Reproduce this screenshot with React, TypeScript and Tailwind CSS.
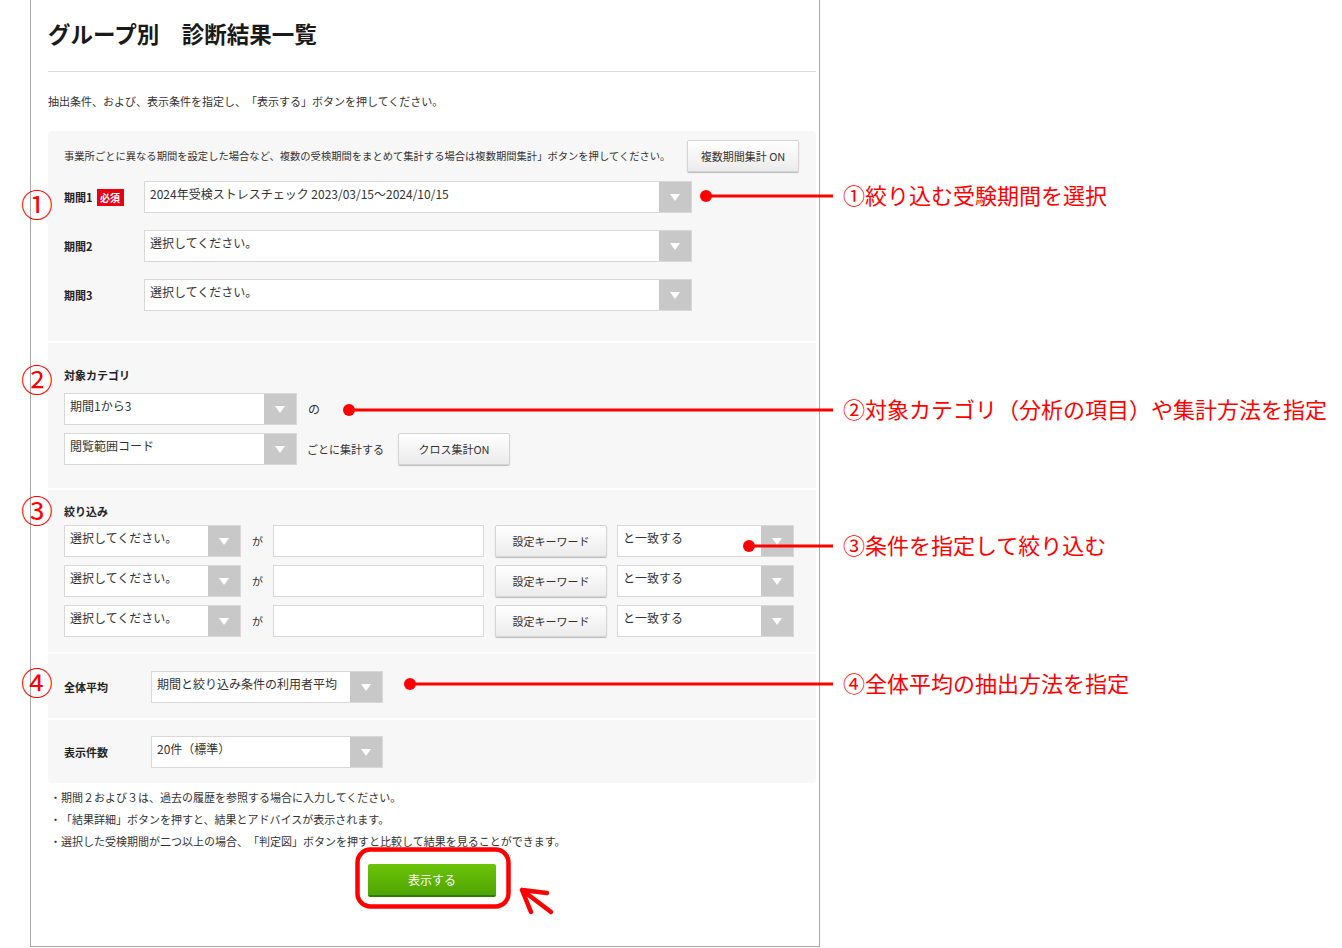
import React from "react";

const FONT = "font-['Noto_Sans_CJK_JP','Noto_Sans',sans-serif] [text-spacing-trim:space-all]";

function Arrow() {
  return (
    <svg width="10" height="7" viewBox="0 0 10 7">
      <path d="M0 0 L10 0 L5 7 Z" fill="#ffffff" />
    </svg>
  );
}

function Select({ w, text }: { w: string; text: string }) {
  return (
    <div className={`flex h-[32px] border border-[#d8d8d8] bg-white ${w}`}>
      <span className="flex-1 truncate pl-[5px] pt-[4px] text-[12px] leading-[15px] text-[#333]">{text}</span>
      <div className="flex w-[32px] items-center justify-center bg-[#c8c8c8]">
        <Arrow />
      </div>
    </div>
  );
}

function GrayButton({ w, label }: { w: string; label: string }) {
  return (
    <button
      className={`flex h-[32px] items-center justify-center rounded-[2px] border border-[#d4d4d4] bg-linear-to-b from-white to-[#ebebeb] text-[11px] text-[#333] shadow-[0_1px_1px_rgba(0,0,0,0.25)] ${w}`}
    >
      {label}
    </button>
  );
}

function Circled({ ch, cy }: { ch: string; cy: number }) {
  return (
    <div
      className="absolute left-[21px] w-[32px] text-center text-[32px] leading-[32px] text-[#ff0000]"
      style={{ top: cy - 16 }}
    >
      {ch}
    </div>
  );
}

function Note({ text, cy }: { text: string; cy: number }) {
  return (
    <div
      className="absolute left-[843px] whitespace-nowrap text-[22px] leading-[30px] text-[#ff0000]"
      style={{ top: cy - 17 }}
    >
      {text}
    </div>
  );
}

export default function App() {
  const filterRows = [0, 1, 2];
  return (
    <div className={`relative h-[948px] w-[1342px] overflow-hidden bg-white ${FONT}`}>
      <div className="ml-[30px] h-[947px] w-[790px] border-x border-b border-[#a8a8a8] pl-[17px]">
        <div className="w-[768px]">
          <h1 className="pt-[17px] text-[22.5px] font-bold leading-[32px] text-[#1a1a1a]">グループ別　診断結果一覧</h1>
          <div className="mt-[22px] h-px bg-[#d9d9d9]" />
          <p className="mt-[21px] text-[11px] leading-[16px] text-[#333]">
            抽出条件、および、表示条件を指定し、「表示する」ボタンを押してください。
          </p>

          <div className="mt-[22px] flex flex-col gap-[2px] overflow-hidden rounded-[4px]">
            {/* section 1 */}
            <div className="bg-[#f7f7f7] pb-[30px] pt-[9px]">
              <div className="flex items-center justify-between pl-[16px] pr-[17px]">
                <span className="text-[10.3px] leading-[16px] text-[#333]">
                  事業所ごとに異なる期間を設定した場合など、複数の受検期間をまとめて集計する場合は複数期間集計」ボタンを押してください。
                </span>
                <GrayButton w="w-[112px]" label="複数期間集計 ON" />
              </div>
              <div className="mt-[9px] flex flex-col gap-[17px] pl-[16px]">
                {[
                  { l: "期間1", req: true, t: "2024年受検ストレスチェック 2023/03/15～2024/10/15" },
                  { l: "期間2", req: false, t: "選択してください。" },
                  { l: "期間3", req: false, t: "選択してください。" },
                ].map((r) => (
                  <div key={r.l} className="flex items-center">
                    <div className="flex w-[80px] items-center">
                      <span className="text-[11px] font-bold leading-[16px] text-[#222]">{r.l}</span>
                      {r.req && (
                        <span className="ml-[4px] flex h-[17px] w-[27px] items-center justify-center bg-[#e60012] text-[10px] font-bold text-white">
                          必須
                        </span>
                      )}
                    </div>
                    <Select w="w-[548px]" text={r.t} />
                  </div>
                ))}
              </div>
            </div>

            {/* section 2 */}
            <div className="bg-[#f7f7f7] pb-[23px] pl-[16px] pt-[24px]">
              <div className="text-[11px] font-bold leading-[16px] text-[#222]">対象カテゴリ</div>
              <div className="mt-[10px] flex flex-col gap-[8px]">
                <div className="flex items-center">
                  <Select w="w-[233px]" text="期間1から3" />
                  <span className="ml-[11px] text-[12px] text-[#333]">の</span>
                </div>
                <div className="flex items-center">
                  <Select w="w-[233px]" text="閲覧範囲コード" />
                  <span className="ml-[10px] text-[11px] text-[#333]">ごとに集計する</span>
                  <div className="ml-[14px]">
                    <GrayButton w="w-[112px]" label="クロス集計ON" />
                  </div>
                </div>
              </div>
            </div>

            {/* section 3 */}
            <div className="bg-[#f7f7f7] pb-[15px] pl-[16px] pt-[13px]">
              <div className="text-[11px] font-bold leading-[16px] text-[#222]">絞り込み</div>
              <div className="mt-[6px] flex flex-col gap-[8px]">
                {filterRows.map((i) => (
                  <div key={i} className="flex items-center">
                    <Select w="w-[177px]" text="選択してください。" />
                    <span className="ml-[11px] w-[21px] text-[11px] text-[#333]">が</span>
                    <div className="h-[32px] w-[211px] border border-[#d8d8d8] bg-white" />
                    <div className="ml-[11px]">
                      <GrayButton w="w-[112px]" label="設定キーワード" />
                    </div>
                    <div className="ml-[10px]">
                      <Select w="w-[177px]" text="と一致する" />
                    </div>
                  </div>
                ))}
              </div>
            </div>

            {/* section 4 */}
            <div className="flex items-center bg-[#f7f7f7] pb-[15px] pl-[16px] pt-[17px]">
              <span className="w-[87px] text-[11px] font-bold leading-[16px] text-[#222]">全体平均</span>
              <Select w="w-[232px]" text="期間と絞り込み条件の利用者平均" />
            </div>

            {/* section 5 */}
            <div className="flex items-center bg-[#f7f7f7] pb-[15px] pl-[16px] pt-[16px]">
              <span className="w-[87px] text-[11px] font-bold leading-[16px] text-[#222]">表示件数</span>
              <Select w="w-[232px]" text="20件（標準）" />
            </div>
          </div>

          <ul className="mt-[3px] pl-[2px] text-[11px] leading-[22px] text-[#333]">
            <li>・期間２および３は、過去の履歴を参照する場合に入力してください。</li>
            <li>・「結果詳細」ボタンを押すと、結果とアドバイスが表示されます。</li>
            <li>・選択した受検期間が二つ以上の場合、「判定図」ボタンを押すと比較して結果を見ることができます。</li>
          </ul>

          <div className="mt-[12px] flex justify-center">
            <button className="flex h-[33px] w-[128px] items-center justify-center rounded-[2px] border-b-2 border-[#2f7d05] bg-linear-to-b from-[#6cc40a] to-[#4fa502] text-[12px] text-white">
              表示する
            </button>
          </div>
        </div>
      </div>

      {/* annotation drawings */}
      <svg className="pointer-events-none absolute left-0 top-0" width="1342" height="948">
        <g fill="#ff0000" stroke="#ff0000">
          <circle cx="706" cy="196" r="6" stroke="none" />
          <line x1="706" y1="196" x2="833" y2="196" strokeWidth="3" />
          <circle cx="349" cy="410" r="6" stroke="none" />
          <line x1="349" y1="410" x2="833" y2="410" strokeWidth="3" />
          <circle cx="749" cy="546" r="6" stroke="none" />
          <line x1="749" y1="546" x2="833" y2="546" strokeWidth="3" />
          <circle cx="410" cy="684" r="6" stroke="none" />
          <line x1="410" y1="684" x2="833" y2="684" strokeWidth="3" />
        </g>
        <rect x="357.5" y="849.5" width="151" height="57" rx="13" fill="none" stroke="#ff0000" strokeWidth="4.5" />
        <path
          d="M547 893 L522 890 L531 912 M522 890 L551 912"
          fill="none"
          stroke="#ff0000"
          strokeWidth="4.5"
          strokeLinecap="round"
          strokeLinejoin="round"
        />
      </svg>

      <Circled ch="①" cy={203} />
      <Circled ch="②" cy={378} />
      <Circled ch="③" cy={509} />
      <Circled ch="④" cy={681} />

      <Note text="①絞り込む受験期間を選択" cy={196} />
      <Note text="②対象カテゴリ（分析の項目）や集計方法を指定" cy={410} />
      <Note text="③条件を指定して絞り込む" cy={546} />
      <Note text="④全体平均の抽出方法を指定" cy={684} />
    </div>
  );
}
